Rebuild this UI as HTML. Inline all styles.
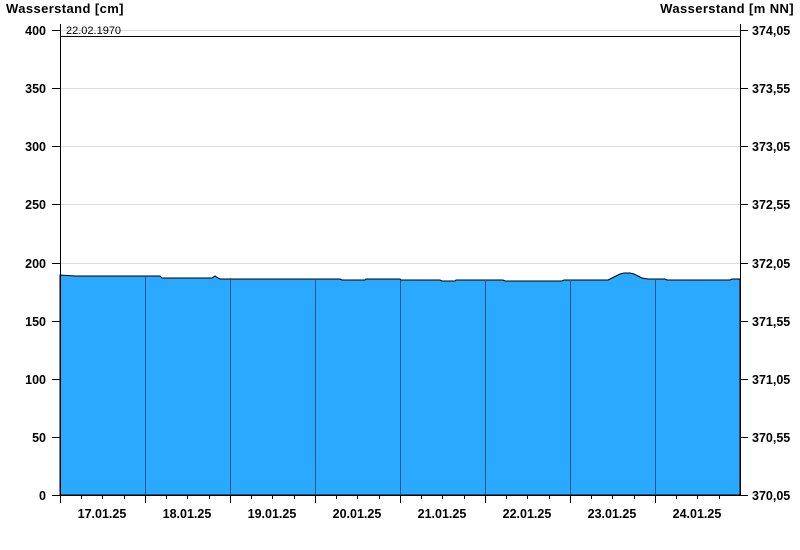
<!DOCTYPE html><html><head><style>body{margin:0;background:#fff}svg{display:block}text{font-family:"Liberation Sans",Arial,sans-serif;font-size:12.5px;font-weight:bold;fill:#000}</style></head><body>
<svg width="800" height="550" viewBox="0 0 800 550">
<text x="6" y="13" style="font-size:13px;letter-spacing:0.4px">Wasserstand [cm]</text>
<text x="794" y="13" text-anchor="end" style="font-size:13px;letter-spacing:0.4px">Wasserstand [m NN]</text>
<g stroke="#dcdcdc" stroke-width="1">
<line x1="60" x2="740" y1="88.5" y2="88.5"/><line x1="60" x2="740" y1="146.5" y2="146.5"/><line x1="60" x2="740" y1="204.5" y2="204.5"/><line x1="60" x2="740" y1="263.5" y2="263.5"/><line x1="60" x2="740" y1="321.5" y2="321.5"/><line x1="60" x2="740" y1="379.5" y2="379.5"/><line x1="60" x2="740" y1="437.5" y2="437.5"/><line x1="60" x2="740" y1="30.5" y2="30.5"/>
</g>
<polygon fill="#2ba8ff" stroke="#000" stroke-width="1" points="60,275 75,276 160,276 162,278 212,278 215,276 218,278 220,279 340,279 342,280 365,280 366,279 400,279 401,280 440,280 442,281 455,281 456,280 503,280 505,281 562,281 564,280 608,280 612,278 616,276 620,274 624,273 630,273 634,274 638,276 642,278 648,279 665,279 667,280 730,280 732,279 740,279 740,495 60,495"/>
<g stroke="#1a5a8a" stroke-width="1"><line x1="145.5" x2="145.5" y1="277" y2="495"/><line x1="230.5" x2="230.5" y1="278" y2="495"/><line x1="315.5" x2="315.5" y1="279" y2="495"/><line x1="400.5" x2="400.5" y1="280" y2="495"/><line x1="485.5" x2="485.5" y1="280" y2="495"/><line x1="570.5" x2="570.5" y1="280" y2="495"/><line x1="655.5" x2="655.5" y1="279" y2="495"/></g>
<line x1="60" x2="740" y1="36.5" y2="36.5" stroke="#000"/>
<text x="66" y="34" style="font-weight:normal;font-size:11px">22.02.1970</text>
<g stroke="#000" stroke-width="1">
<line x1="60.5" x2="60.5" y1="24" y2="503"/><line x1="740.5" x2="740.5" y1="24" y2="495"/><line x1="52" x2="740" y1="495.5" y2="495.5"/>
<path d="M52 30.5h8M52 88.5h8M52 146.5h8M52 204.5h8M52 263.5h8M52 321.5h8M52 379.5h8M52 437.5h8M740 30.5h8M740 88.5h8M740 146.5h8M740 204.5h8M740 263.5h8M740 321.5h8M740 379.5h8M740 437.5h8M740 495.5h8"/>
<path d="M145.5 495v8M230.5 495v8M315.5 495v8M400.5 495v8M485.5 495v8M570.5 495v8M655.5 495v8M81.5 495v4M102.5 495v4M124.5 495v4M166.5 495v4M187.5 495v4M209.5 495v4M251.5 495v4M272.5 495v4M294.5 495v4M336.5 495v4M357.5 495v4M379.5 495v4M421.5 495v4M442.5 495v4M464.5 495v4M506.5 495v4M527.5 495v4M549.5 495v4M591.5 495v4M612.5 495v4M634.5 495v4M676.5 495v4M697.5 495v4M719.5 495v4"/>
</g>
<g text-anchor="end"><text x="46" y="35">400</text><text x="46" y="93">350</text><text x="46" y="151">300</text><text x="46" y="209">250</text><text x="46" y="268">200</text><text x="46" y="326">150</text><text x="46" y="384">100</text><text x="46" y="442">50</text><text x="46" y="500">0</text></g>
<g><text x="752" y="35">374,05</text><text x="752" y="93">373,55</text><text x="752" y="151">373,05</text><text x="752" y="209">372,55</text><text x="752" y="268">372,05</text><text x="752" y="326">371,55</text><text x="752" y="384">371,05</text><text x="752" y="442">370,55</text><text x="752" y="500">370,05</text></g>
<g text-anchor="middle"><text x="102" y="518">17.01.25</text><text x="187" y="518">18.01.25</text><text x="272" y="518">19.01.25</text><text x="357" y="518">20.01.25</text><text x="442" y="518">21.01.25</text><text x="527" y="518">22.01.25</text><text x="612" y="518">23.01.25</text><text x="697" y="518">24.01.25</text></g>
</svg></body></html>
